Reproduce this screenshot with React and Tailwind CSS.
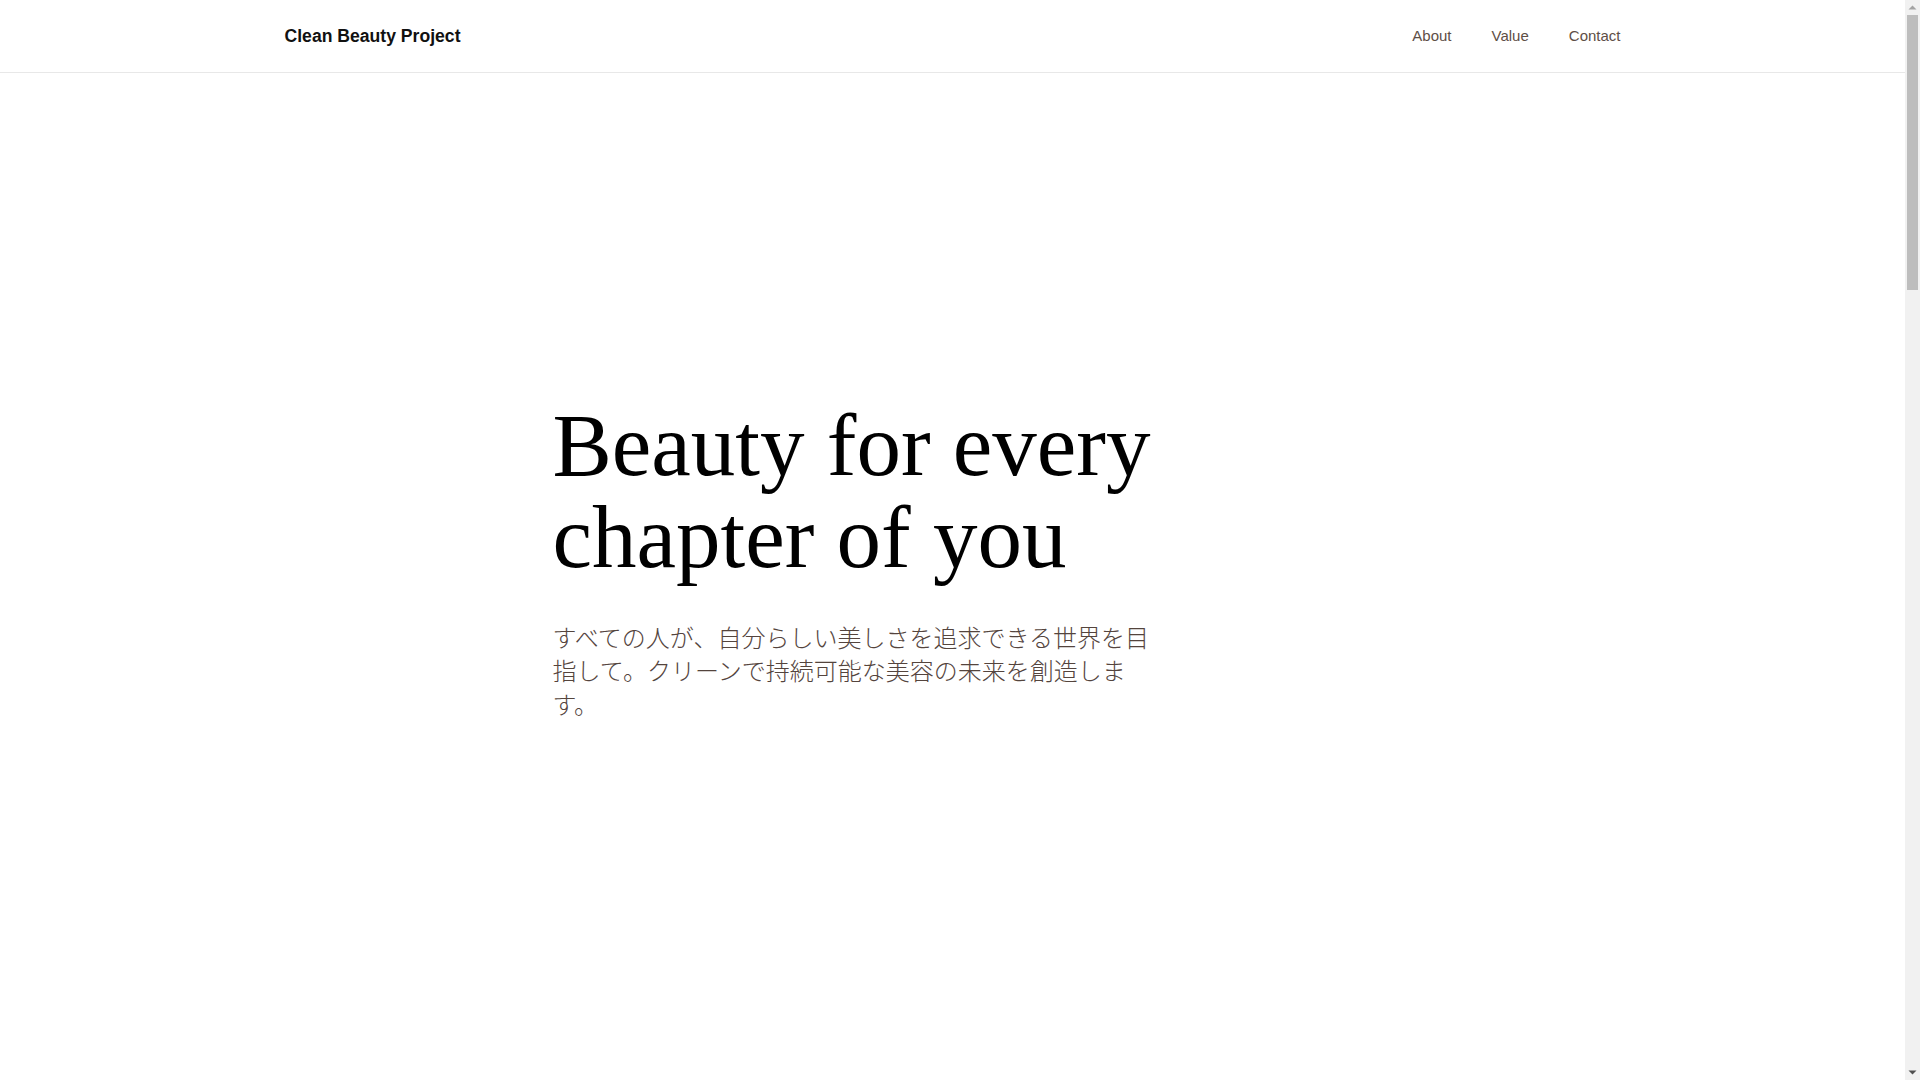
const navItems = ["About", "Value", "Contact"];

const Header = () => {
  return (
    <header className="border-b border-[#e8e8e8] bg-white">
      <div className="mx-auto flex h-[72px] max-w-[1400px] items-center justify-between px-8">
        <a href="#" className="text-[17.6px] font-bold text-[#111]">
          Clean Beauty Project
        </a>
        <nav className="flex items-center gap-10">
          {navItems.map((item) => (
            <a
              key={item}
              href={`#${item.toLowerCase()}`}
              className="text-[15px] text-[#5e4e46] transition-colors hover:text-black"
            >
              {item}
            </a>
          ))}
        </nav>
      </div>
    </header>
  );
};

const Hero = () => {
  return (
    <section className="flex h-[calc(100vh-73px)] items-center justify-center pb-[34px]">
      <div className="w-full max-w-[800px]">
        <h1 className="max-w-[640px] font-['Liberation_Serif',serif] text-[89px] font-normal leading-[1.04] text-black">
          Beauty for every chapter of you
        </h1>
        <p className="mt-[36px] max-w-[600px] font-['Noto_Sans_CJK_JP',sans-serif] text-[24px] font-light leading-[1.4] text-[#54443d]">
          すべての人が、自分らしい美しさを追求できる世界を目指して。クリーンで持続可能な美容の未来を創造します。
        </p>
      </div>
    </section>
  );
};

const Section = ({ id, title, children }) => {
  return (
    <section id={id} className="mx-auto max-w-[800px] py-40">
      <h2 className="font-['Liberation_Serif',serif] text-5xl text-black">
        {title}
      </h2>
      <div className="mt-8 font-['Noto_Sans_CJK_JP',sans-serif] text-lg leading-loose text-[#6a5950]">
        {children}
      </div>
    </section>
  );
};

// classic scrollbar, the shot's browser draws none
const Scrollbar = () => {
  return (
    <div className="fixed right-0 top-0 flex h-screen w-[15px] flex-col items-center bg-[#f1f1f1]">
      <svg width="15" height="15" viewBox="0 0 15 15" className="shrink-0">
        <path d="M3.5 9.5 L7.5 5.5 L11.5 9.5 Z" fill="#a3a3a3" />
      </svg>
      <div className="h-[275px] w-[11px] bg-[#bdbdbd]" />
      <div className="flex-1" />
      <svg width="15" height="15" viewBox="0 0 15 15" className="shrink-0">
        <path d="M3.5 5.5 L11.5 5.5 L7.5 9.5 Z" fill="#505050" />
      </svg>
    </div>
  );
};

export default function App() {
  return (
    <div className="bg-white pr-[15px] font-['Liberation_Sans',Arial,sans-serif]">
      <Header />
      <Hero />
      <Section id="about" title="About">
        <p>
          私たちは、肌と地球にやさしい成分だけを選び、毎日のケアをもっとシンプルに、もっと心地よくすることを目指しています。
        </p>
      </Section>
      <Section id="value" title="Value">
        <p>透明性、サステナビリティ、そして一人ひとりの個性を大切にします。</p>
      </Section>
      <Section id="contact" title="Contact">
        <p>お問い合わせはこちらからお気軽にどうぞ。</p>
      </Section>
      <footer className="border-t border-[#e8e8e8] py-10 text-center text-sm text-[#5e4e46]">
        © Clean Beauty Project
      </footer>
      <Scrollbar />
    </div>
  );
}
